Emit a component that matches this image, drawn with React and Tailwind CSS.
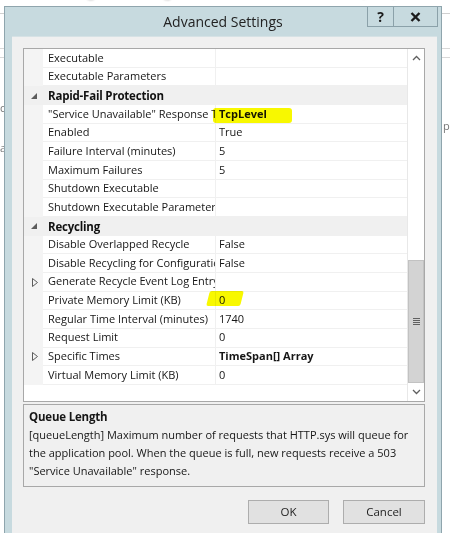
import React from "react";

const FONT = { fontFamily: '"Open Sans", "Noto Sans", "DejaVu Sans", sans-serif' };

const rows = [
  { label: "Executable" },
  { label: "Executable Parameters" },
  { cat: "Rapid-Fail Protection" },
  { label: '"Service Unavailable" Response Type', value: "TcpLevel", bold: true },
  { label: "Enabled", value: "True" },
  { label: "Failure Interval (minutes)", value: "5" },
  { label: "Maximum Failures", value: "5" },
  { label: "Shutdown Executable" },
  { label: "Shutdown Executable Parameters" },
  { cat: "Recycling" },
  { label: "Disable Overlapped Recycle", value: "False" },
  { label: "Disable Recycling for Configuration Changes", value: "False" },
  { label: "Generate Recycle Event Log Entry", expand: true },
  { label: "Private Memory Limit (KB)", value: "0" },
  { label: "Regular Time Interval (minutes)", value: "1740" },
  { label: "Request Limit", value: "0" },
  { label: "Specific Times", value: "TimeSpan[] Array", bold: true, expand: true },
  { label: "Virtual Memory Limit (KB)", value: "0" },
];

function Expanded() {
  return (
    <svg width="6" height="6" viewBox="0 0 6 6">
      <polygon points="6,0 6,6 0,6" fill="#5c5c5c" />
    </svg>
  );
}

function Collapsed() {
  return (
    <svg width="6" height="9" viewBox="0 0 6 9">
      <polygon points="0.5,0.5 5.5,4.5 0.5,8.5" fill="none" stroke="#5c5c5c" strokeWidth="1" />
    </svg>
  );
}

function Row({ r }) {
  if (r.cat) {
    return (
      <div className="flex h-[18.67px] items-center bg-[#f0f0f0]">
        <div className="flex w-[19px] justify-end pr-[6px]">
          <Expanded />
        </div>
        <div className="pl-[5px] text-[11.5px] font-bold tracking-[-0.2px] text-[#111]">{r.cat}</div>
      </div>
    );
  }
  return (
    <div className="flex h-[18.67px] items-stretch">
      <div className="flex w-[19px] items-center justify-end bg-[#f4f4f4] pr-[5px]">
        {r.expand ? <Collapsed /> : null}
      </div>
      <div className="flex w-[172px] items-center overflow-hidden whitespace-nowrap border-b border-[#f0f0f0] pl-[5px] text-[11px] text-[#161616]">
        {r.label}
      </div>
      <div className="w-px bg-[#f0f0f0]" />
      <div
        className={
          "flex flex-1 items-center whitespace-nowrap border-b border-[#f0f0f0] pl-[3px] text-[11px] text-[#161616] " +
          (r.bold ? "font-bold" : "")
        }
      >
        {r.value || ""}
      </div>
    </div>
  );
}

function Chevron({ up }) {
  return (
    <svg width="9" height="6" viewBox="0 0 9 6">
      <polyline
        points={up ? "1,5 4.5,1.5 8,5" : "1,1 4.5,4.5 8,1"}
        fill="none"
        stroke="#606060"
        strokeWidth="1.3"
      />
    </svg>
  );
}

export default function App() {
  return (
    <div className="relative h-[533px] w-[450px] overflow-hidden bg-white" style={FONT}>
      {/* desktop background */}
      <div className="absolute left-0 top-[13px] h-px w-[450px] bg-[#d0d0d0]" />
      <div className="absolute left-0 top-[48px] h-px w-[450px] bg-[#d8d8d8]" />
      <div className="absolute left-0 top-[57px] h-px w-[450px] bg-[#d8d8d8]" />
      <div className="absolute left-0 top-[100px] text-[11px] text-[#777]">c</div>
      <div className="absolute left-0 top-[140px] text-[11px] text-[#777]">a</div>
      <div className="absolute left-[443px] top-[118px] text-[11px] text-[#777]">p</div>
      <div className="absolute left-[80px] top-[-17px] whitespace-nowrap text-[13px] text-[#999] blur-[0.8px]">
        ages the configuration information for Service (WAS) Fields
      </div>

      {/* dialog window */}
      <div className="absolute left-[4px] top-[6px] flex h-[560px] w-[438px] flex-col border border-[#8fa5ad] bg-[#c7dadf]">
        {/* title bar */}
        <div className="grid h-[29px] grid-cols-[1fr_auto_1fr]">
          <div />
          <div className="pt-[4px] text-[14px] text-[#222]">Advanced Settings</div>
          <div className="flex justify-end pr-[3px]">
            <div className="flex h-[20px]">
              <div className="flex w-[27px] items-center justify-center border border-t-0 border-[#8ba1a9] text-[14px] font-bold text-[#1c1c1c]">
                ?
              </div>
              <div className="flex w-[44px] items-center justify-center border border-l-0 border-t-0 border-[#8ba1a9]">
                <svg width="11" height="10" viewBox="0 0 11 10">
                  <path d="M1.5 1 L9.5 9 M9.5 1 L1.5 9" stroke="#1c1c1c" strokeWidth="2.4" />
                </svg>
              </div>
            </div>
          </div>
        </div>

        {/* client area */}
        <div className="ml-[7px] mr-[4px] flex flex-1 flex-col border-t border-[#d6e2e5] bg-[#f0f0f0] pl-[11px] pt-[11px]">
          {/* property grid */}
          <div className="flex h-[354px] w-[402px] border border-[#a8a8a8] bg-white">
            <div className="flex w-[383px] flex-col">
              {rows.map((r, i) => (
                <Row key={i} r={r} />
              ))}
            </div>
            <div className="flex w-[17px] flex-col border-l border-[#e8e8e8] bg-white">
              <div className="flex h-[17px] items-center justify-center">
                <Chevron up />
              </div>
              <div className="h-[194px]" />
              <div className="flex h-[123px] items-center justify-center border border-[#c2c2c2] bg-[#d3d3d3]">
                <div className="flex flex-col gap-[1px]">
                  <div className="h-px w-[7px] bg-[#606060]" />
                  <div className="h-px w-[7px] bg-[#606060]" />
                  <div className="h-px w-[7px] bg-[#606060]" />
                  <div className="h-px w-[7px] bg-[#606060]" />
                </div>
              </div>
              <div className="flex flex-1 items-center justify-center">
                <Chevron />
              </div>
            </div>
          </div>

          {/* description pane */}
          <div className="mt-[2px] h-[83px] w-[402px] border border-[#a8a8a8] bg-[#f0f0f0] px-[5px] pt-[3px] text-[11px] leading-[18px] text-[#161616]">
            <div className="text-[11.5px] font-bold tracking-[-0.2px]">Queue Length</div>
            <div>
              [queueLength] Maximum number of requests that HTTP.sys will queue for the application pool. When the
              queue is full, new requests receive a 503 "Service Unavailable" response.
            </div>
          </div>

          {/* buttons */}
          <div className="mt-[13px] flex w-[402px] justify-end gap-[14px]">
            <div className="flex h-[24px] w-[81px] items-center justify-center border border-[#adadad] bg-[#e1e1e1] text-[11.5px] text-[#1e1e1e]">
              OK
            </div>
            <div className="flex h-[24px] w-[82px] items-center justify-center border border-[#adadad] bg-[#e1e1e1] text-[11.5px] text-[#1e1e1e]">
              Cancel
            </div>
          </div>
        </div>
      </div>

      {/* highlighter marks */}
      <div className="absolute left-[213px] top-[108px] h-[15px] w-[79px] rounded-[3px] bg-[#f8f800] mix-blend-multiply" />
      <div className="absolute left-[208px] top-[291px] h-[15px] w-[34px] -skew-x-[14deg] rounded-[2px] bg-[#f8f800] mix-blend-multiply" />
    </div>
  );
}
